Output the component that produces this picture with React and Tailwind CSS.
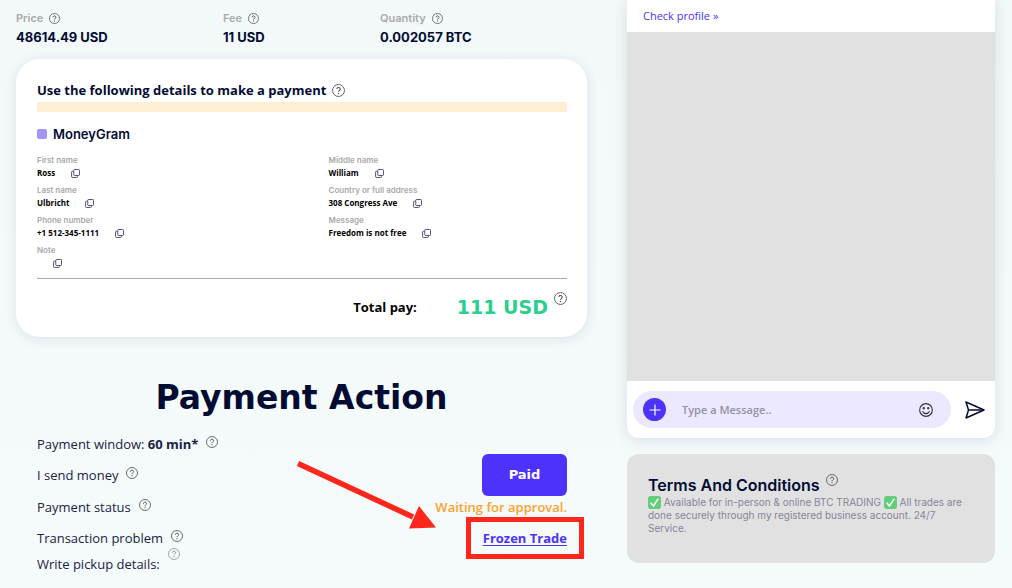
import React, { useState } from 'react';

const summary = [
    { label: 'Price', value: '48614.49 USD' },
    { label: 'Fee', value: '11 USD' },
    { label: 'Quantity', value: '0.002057 BTC' },
];

const details = [
    { label: 'First name', value: 'Ross' },
    { label: 'Middle name', value: 'William' },
    { label: 'Last name', value: 'Ulbricht' },
    { label: 'Country or full address', value: '308 Congress Ave' },
    { label: 'Phone number', value: '+1 512-345-1111' },
    { label: 'Message', value: 'Freedom is not free' },
    { label: 'Note', value: '' },
];

const HelpIcon = ({ className = 'size-3' }) => (
    <svg viewBox="0 0 24 24" fill="none" stroke="currentColor" strokeWidth="1.6" className={`shrink-0 text-[#4b4b4b] ${className}`}>
        <circle cx="12" cy="12" r="11" />
        <path d="M8.8 9.4c0-1.9 1.4-3 3.2-3s3.2 1.2 3.2 2.9c0 2.2-3.1 2.5-3.1 5" strokeWidth="2" />
        <path d="M12 16.4v2.2" strokeWidth="2.2" />
    </svg>
);

const CopyIcon = () => (
    <svg viewBox="0 0 18 18" fill="none" stroke="#3c4363" strokeWidth="1.8" className="size-[9px]">
        <rect x="5.5" y="1" width="11.5" height="12" rx="1.6" />
        <path d="M5 4.5H2.8c-1 0-1.6.6-1.6 1.6v9.2c0 1 .6 1.6 1.6 1.6h8.4c1 0 1.6-.6 1.6-1.6V13" />
    </svg>
);

const CheckMark = () => (
    <svg viewBox="0 0 26 26" role="img" aria-label="check" className="inline-block size-[13px] align-[-3px]">
        <rect x="0.5" y="0.5" width="25" height="25" rx="3.5" fill="#4ebd64" />
        <rect x="2" y="2" width="22" height="22" rx="2.5" fill="#5fd077" />
        <path d="M6 14.2l4.8 5.6L20 6.2" fill="none" stroke="#fff" strokeWidth="3" strokeLinecap="round" />
    </svg>
);

const Detail = ({ label, value }) => (
    <div>
        <dt className="font-[Inter,sans-serif] text-[8px] leading-3 font-semibold text-[#a9a9a9]">{label}</dt>
        <dd className="flex h-3.5 items-center gap-4 text-[8px] font-bold text-black">
            <span>{value}</span>
            <button type="button" aria-label={`Copy ${label}`}><CopyIcon /></button>
        </dd>
    </div>
);

const PaymentDetails = () => (
    <section className="mt-3 rounded-3xl bg-white pt-[21px] pr-5 pb-4 pl-[21px] shadow-[0_2px_12px_rgba(60,90,120,0.14)]">
        <h2 className="flex items-center gap-1.5 text-[13px] leading-5 font-bold">
            Use the following details to make a payment
            <HelpIcon className="size-[13px]" />
        </h2>
        <div className="mt-0.5 h-2.5 bg-[#ffeed3]" />
        <h3 className="mt-3 flex items-center gap-1.5 font-[Inter,sans-serif] text-[13px] leading-5 font-semibold">
            <span className="size-2.5 rounded-[2px] bg-[#a195fb]" />
            MoneyGram
        </h3>
        <dl className="mt-2.5 grid grid-cols-[11fr_9fr] gap-y-1">
            {details.map((item) => <Detail key={item.label} {...item} />)}
        </dl>
        <div className="mt-2 flex h-[43px] items-end justify-end border-t border-[#a9a9a9]">
            <span className="mr-10 text-[13px] leading-7 font-bold text-black">Total pay:</span>
            <strong className="mr-1.5 font-['DejaVu_Sans',sans-serif] text-[19px] leading-7 font-bold text-[#2bd08f]">111 USD</strong>
            <HelpIcon className="mb-4 size-[13px]" />
        </div>
    </section>
);

const Arrow = () => (
    <svg viewBox="0 0 140 70" className="pointer-events-none absolute top-[26px] right-[151px] h-[70px] w-[140px]">
        <path d="M2 3.5L117 57" stroke="#ff261c" strokeWidth="5.5" />
        <path d="M123 46L140 67.5L113 68.5Z" fill="#ff261c" />
    </svg>
);

const PaymentAction = () => (
    <section>
        <h1 className="mt-[43px] text-center font-['DejaVu_Sans',sans-serif] text-[33px] leading-9 font-bold">Payment Action</h1>
        <div className="relative mt-[18px] pr-5 pl-[21px] text-[13px] leading-5 text-[#1b2346]">
            <div className="flex h-5 gap-2">
                <p>Payment window: <b>60 min*</b></p>
                <HelpIcon className="mt-0.5 size-3" />
            </div>
            <div className="flex h-[42px] items-center justify-between">
                <div className="flex gap-2">
                    <p>I send money</p>
                    <HelpIcon className="mt-0.5 size-3" />
                </div>
                <button type="button" className="h-[42px] w-[85px] rounded-md bg-[#4c32fa] font-['DejaVu_Sans',sans-serif] font-bold text-white">Paid</button>
            </div>
            <div className="flex h-[22px] items-center justify-between">
                <div className="flex gap-2">
                    <p>Payment status</p>
                    <HelpIcon className="mt-0.5 size-3" />
                </div>
                <p className="font-semibold text-[#fca32c]">Waiting for approval.</p>
            </div>
            <div className="flex h-[30px] items-end justify-between">
                <div className="flex gap-2">
                    <p>Transaction problem</p>
                    <HelpIcon className="mt-0.5 size-3" />
                </div>
                <a href="#frozen" className="relative font-bold text-[#4c32fa] underline underline-offset-2">
                    Frozen Trade
                    <span className="absolute -inset-x-[17px] -inset-y-[11px] border-[5px] border-[#ff261c]" />
                </a>
            </div>
            <div className="flex h-[26px] items-end gap-2">
                <p>Write pickup details:</p>
                <HelpIcon className="size-3 self-start opacity-60" />
            </div>
            <Arrow />
        </div>
    </section>
);

const Chat = () => {
    const [message, setMessage] = useState('');

    return (
        <section className="overflow-hidden rounded-b-xl bg-white shadow-[0_2px_14px_rgba(60,90,120,0.16)]">
            <div className="flex h-8 items-center px-4">
                <a href="#profile" className="text-[11px] leading-4 text-[#4c32fa]">Check profile »</a>
            </div>
            <div className="h-[349px] bg-[#e1e1e1]" />
            <form className="flex items-center gap-3.5 py-2.5 pr-2.5 pl-1.5" onSubmit={(e) => e.preventDefault()}>
                <div className="flex h-[37px] min-w-0 flex-1 items-center rounded-full bg-[#ebe8ff] pr-[18px] pl-2.5">
                    <button type="button" aria-label="Add attachment" className="flex size-[23px] shrink-0 items-center justify-center rounded-full bg-[#4c32fa]">
                        <svg viewBox="0 0 12 12" stroke="#fff" strokeWidth="1.2" className="size-3"><path d="M6 .5v11M.5 6h11" /></svg>
                    </button>
                    <input
                        type="text"
                        aria-label="Message"
                        placeholder="Type a Message.."
                        value={message}
                        onChange={(e) => setMessage(e.target.value)}
                        className="ml-4 min-w-0 flex-1 bg-transparent text-[11px] leading-4 font-semibold outline-none placeholder:text-[#9292a3]"
                    />
                    <button type="button" aria-label="Emoji">
                        <svg viewBox="0 0 28 28" fill="none" stroke="#33343f" strokeWidth="2.2" className="size-3.5">
                            <circle cx="14" cy="14" r="12.7" />
                            <circle cx="9.5" cy="10.5" r="1.2" fill="#33343f" />
                            <circle cx="18.5" cy="10.5" r="1.2" fill="#33343f" />
                            <path d="M7 16.5c1.5 3.2 4 4.7 7 4.7s5.5-1.5 7-4.7" />
                        </svg>
                    </button>
                </div>
                <button type="submit" aria-label="Send">
                    <svg viewBox="0 0 40 36" fill="none" stroke="#020c33" strokeWidth="3" strokeLinejoin="round" className="h-[18px] w-5">
                        <path d="M2 2l36 16L2 34l5-16z" />
                        <path d="M7 18h30" />
                    </svg>
                </button>
            </form>
        </section>
    );
};

const Terms = () => (
    <section className="mt-4 rounded-xl bg-[#e1e1e1] pt-5 pr-5 pb-7 pl-[21px] font-[Inter,sans-serif]">
        <h2 className="flex gap-1.5 text-base leading-[22px] font-semibold">
            Terms And Conditions
            <HelpIcon className="size-3" />
        </h2>
        <p className="text-[10px] leading-[13px] text-[#85859a]">
            <CheckMark /> Available for in-person &amp; online BTC TRADING <CheckMark /> All trades are done securely through my registered business account. 24/7 Service.
        </p>
    </section>
);

const App = () => (
    <div className="flex min-h-screen items-start gap-10 bg-gradient-to-b from-[#f3f8f9] to-[#f5fafb] pr-[17px] pl-4 font-['Open_Sans',sans-serif] text-[#020c33]">
        <main className="min-w-0 flex-1 pt-2.5">
            <dl className="grid grid-cols-[207fr_157fr_207fr] font-[Inter,sans-serif]">
                {summary.map((item) => (
                    <div key={item.label} className="space-y-px">
                        <dt className="flex items-center gap-1.5 text-[11px] leading-4 font-semibold text-[#a9aaac]">
                            {item.label}
                            <HelpIcon className="size-[11px]" />
                        </dt>
                        <dd className="text-[13px] leading-5 font-bold">{item.value}</dd>
                    </div>
                ))}
            </dl>
            <PaymentDetails />
            <PaymentAction />
        </main>
        <aside className="w-[368px] shrink-0">
            <Chat />
            <Terms />
        </aside>
    </div>
);

export default App;
